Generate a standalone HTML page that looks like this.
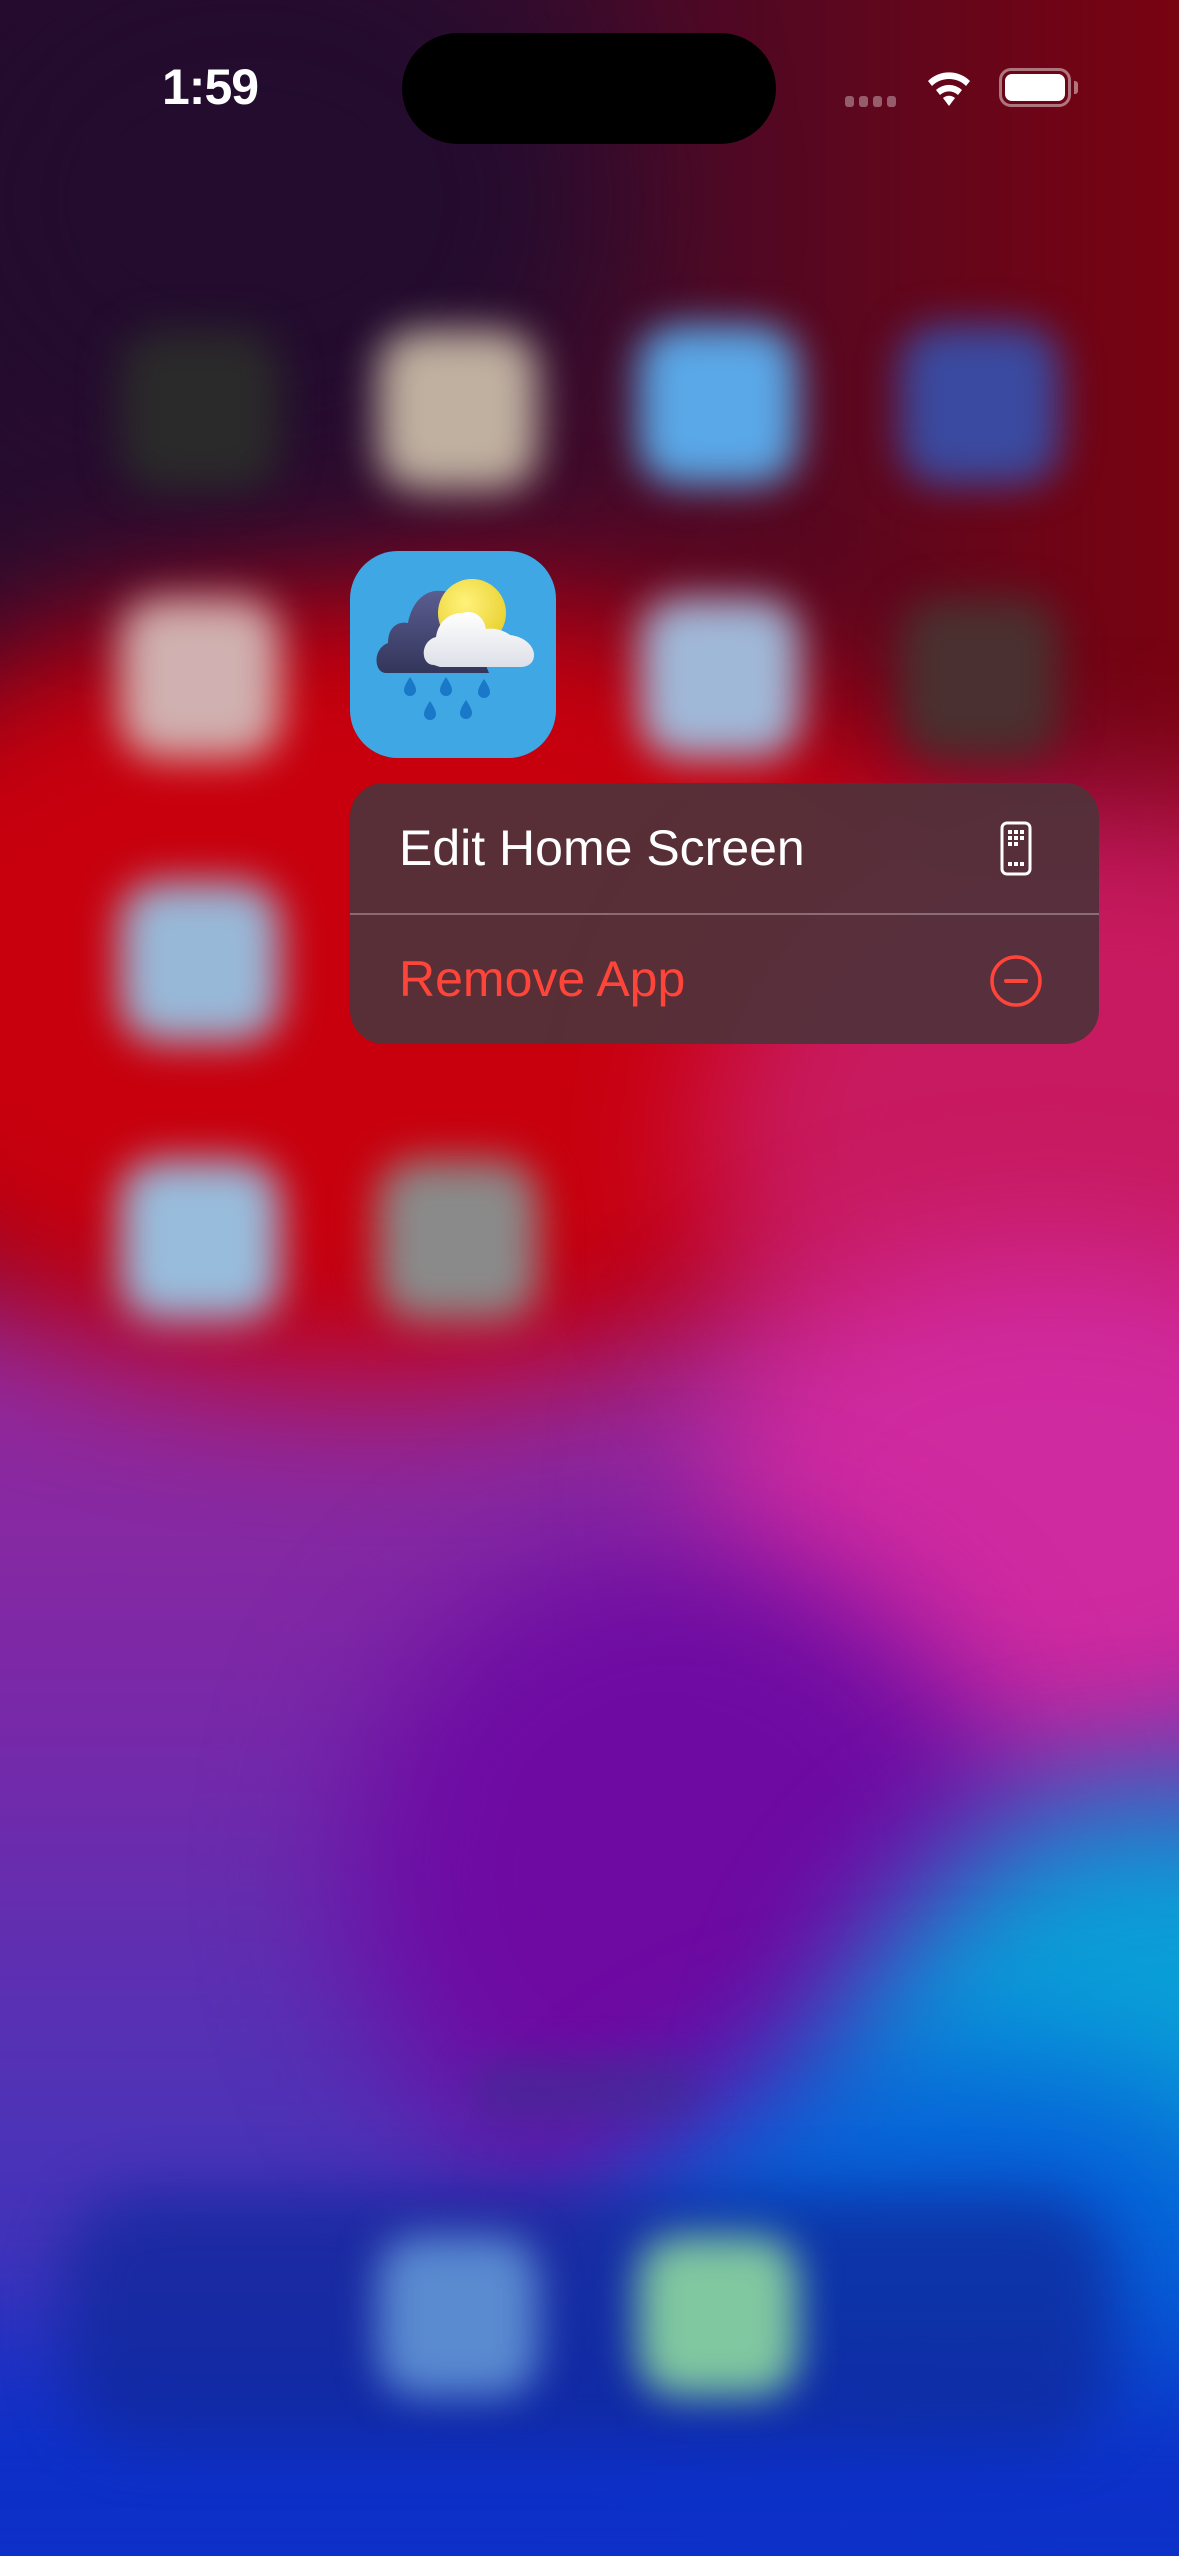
<!DOCTYPE html>
<html><head><meta charset="utf-8"><style>
*{margin:0;padding:0;box-sizing:border-box}
html,body{width:1179px;height:2556px;overflow:hidden}
body{position:relative;background:#1530c8;font-family:"Liberation Sans",sans-serif}
.bg{position:absolute;left:0;top:0;width:1179px;height:2556px;overflow:hidden}
.b{position:absolute;filter:blur(70px)}
.ic{position:absolute;width:160px;height:160px;border-radius:40px;filter:blur(20px)}
</style></head><body>
<div class="bg">
 <div class="b" style="left:-200px;top:-200px;width:1600px;height:1700px;background:linear-gradient(90deg,#220c2e 0%,#350c30 40%,#6a0518 75%,#8a0008 100%)"></div>
 <div class="b" style="left:-300px;top:1250px;width:1800px;height:1500px;background:linear-gradient(180deg,#9a2a9a 0%,#7a28a8 30%,#4a34b8 60%,#1a30c0 100%)"></div>
 <div class="b" style="left:-250px;top:580px;width:1250px;height:800px;border-radius:50%;background:#c8000e"></div>
 <div class="b" style="left:700px;top:800px;width:800px;height:700px;border-radius:50%;background:#c81a60"></div>
 <div class="b" style="left:700px;top:1250px;width:700px;height:500px;border-radius:50%;background:#d02aa0"></div>
 <div class="b" style="left:350px;top:1550px;width:650px;height:650px;border-radius:50%;background:#6e0aa2"></div>
 <div class="b" style="left:820px;top:1800px;width:700px;height:700px;border-radius:50%;background:#0aa0d8"></div>
 <div class="b" style="left:600px;top:2050px;width:700px;height:450px;border-radius:50%;background:#0660d8"></div>
 <div class="b" style="left:-200px;top:2350px;width:1600px;height:300px;background:#0c30c8"></div>
 <div class="b" style="left:-100px;top:-100px;width:700px;height:600px;border-radius:50%;background:#230c2e;filter:blur(90px)"></div>
 <div class="ic" style="left:120px;top:330px;background:#2a2a2a"></div>
 <div class="ic" style="left:378px;top:330px;background:#c0b0a0"></div>
 <div class="ic" style="left:638px;top:325px;background:#5aa8e8"></div>
 <div class="ic" style="left:900px;top:325px;background:#3a4aa0"></div>
 <div class="ic" style="left:120px;top:598px;background:#d0b0b0"></div>
 <div class="ic" style="left:640px;top:598px;background:#a0b8d8"></div>
 <div class="ic" style="left:900px;top:598px;background:#4a3030"></div>
 <div class="ic" style="left:120px;top:882px;background:#98b8d8"></div>
 <div class="ic" style="left:120px;top:1160px;background:#98bcdc"></div>
 <div class="ic" style="left:378px;top:1160px;background:#8a8a8a"></div>
 <div style="position:absolute;left:470px;top:2060px;width:230px;height:60px;border-radius:30px;background:#3a3090;filter:blur(20px);opacity:.6"></div>
 <div style="position:absolute;left:65px;top:2192px;width:1050px;height:253px;border-radius:80px;background:#10289a;opacity:.75;filter:blur(30px)"></div>
 <div class="ic" style="left:378px;top:2236px;background:#5a8ad0"></div>
 <div class="ic" style="left:638px;top:2236px;background:#80c8a0"></div>
</div>

<div style="position:absolute;left:402px;top:33px;width:374px;height:111px;border-radius:56px;background:#000"></div>
<div style="position:absolute;left:162px;top:58px;font-size:50px;font-weight:bold;color:#fff;letter-spacing:-1px">1:59</div>
<div style="position:absolute;left:845px;top:96px;display:flex;gap:5px">
 <i style="width:9px;height:11px;border-radius:3px;background:rgba(255,255,255,.35)"></i><i style="width:9px;height:11px;border-radius:3px;background:rgba(255,255,255,.35)"></i><i style="width:9px;height:11px;border-radius:3px;background:rgba(255,255,255,.35)"></i><i style="width:9px;height:11px;border-radius:3px;background:rgba(255,255,255,.35)"></i>
</div>
<svg style="position:absolute;left:923px;top:68px" width="52" height="40" viewBox="0 0 52 40"><path d="M26 38 L20 30 A9 9 0 0 1 32 30 Z" fill="#fff"/><path d="M13 22 A19 19 0 0 1 39 22 L35 27 A13 13 0 0 0 17 27 Z" fill="#fff"/><path d="M5 13 A30 30 0 0 1 47 13 L43 18 A24 24 0 0 0 9 18 Z" fill="#fff"/></svg>
<div style="position:absolute;left:999px;top:68px;width:72px;height:39px;border-radius:12px;border:3px solid rgba(255,255,255,.45)"></div>
<div style="position:absolute;left:1005px;top:74px;width:60px;height:27px;border-radius:7px;background:#fff"></div>
<div style="position:absolute;left:1074px;top:81px;width:4px;height:13px;border-radius:0 3px 3px 0;background:rgba(255,255,255,.45)"></div>

<div style="position:absolute;left:350px;top:551px;width:206px;height:207px;border-radius:48px;background:#3fa8e4;overflow:hidden">
 <svg width="206" height="207" viewBox="0 0 206 207">
  <defs><radialGradient id="s" cx=".4" cy=".35" r=".7"><stop offset="0" stop-color="#fff27a"/><stop offset="1" stop-color="#e8d030"/></radialGradient>
  <linearGradient id="d" x1="0" y1="0" x2="0" y2="1"><stop offset="0" stop-color="#5a5e90"/><stop offset="1" stop-color="#33355a"/></linearGradient>
  <linearGradient id="w" x1="0" y1="0" x2="0" y2="1"><stop offset="0" stop-color="#fff"/><stop offset="1" stop-color="#dde0e8"/></linearGradient></defs>
  <path d="M36 122 C24 122 22 98 38 92 C38 76 48 70 58 72 C62 50 76 38 92 40 C108 40 118 54 118 70 L139 122 Z" fill="url(#d)"/>
  <circle cx="122" cy="62" r="34" fill="url(#s)"/>
  <path d="M84 114 C70 114 70 90 86 86 C88 72 98 62 112 62 C124 58 134 66 136 78 C150 76 160 84 160 84 C176 86 184 96 184 104 C184 112 178 116 170 116 L90 116 Z" fill="url(#w)"/>
  <g fill="#1a78c8">
   <path d="M60 126 c-4 6 -6 10 -6 13 a6 6 0 0 0 12 0 c0 -3 -2 -7 -6 -13z"/>
   <path d="M96 126 c-4 6 -6 10 -6 13 a6 6 0 0 0 12 0 c0 -3 -2 -7 -6 -13z"/>
   <path d="M134 128 c-4 6 -6 10 -6 13 a6 6 0 0 0 12 0 c0 -3 -2 -7 -6 -13z"/>
   <path d="M80 150 c-4 6 -6 10 -6 13 a6 6 0 0 0 12 0 c0 -3 -2 -7 -6 -13z"/>
   <path d="M116 149 c-4 6 -6 10 -6 13 a6 6 0 0 0 12 0 c0 -3 -2 -7 -6 -13z"/>
  </g>
 </svg>
</div>

<div style="position:absolute;left:350px;top:783px;width:749px;height:261px;border-radius:34px;background:rgba(80,50,58,.93);overflow:hidden">
 <div style="position:absolute;left:49px;top:36px;font-size:50px;color:#fff">Edit Home Screen</div>
 <div style="position:absolute;left:0;top:130px;width:100%;height:2px;background:rgba(255,255,255,.3)"></div>
 <div style="position:absolute;left:49px;top:167px;font-size:50px;color:#ff453a">Remove App</div>
 <svg style="position:absolute;left:648px;top:38px" width="36" height="56" viewBox="0 0 36 56"><rect x="4" y="2" width="28" height="51" rx="5" fill="none" stroke="#fff" stroke-width="3"/><g fill="#fff"><rect x="10" y="9" width="4" height="4"/><rect x="16" y="9" width="4" height="4"/><rect x="22" y="9" width="4" height="4"/><rect x="10" y="15" width="4" height="4"/><rect x="16" y="15" width="4" height="4"/><rect x="22" y="15" width="4" height="4"/><rect x="10" y="21" width="4" height="4"/><rect x="16" y="21" width="4" height="4"/><rect x="10" y="41" width="4" height="4"/><rect x="16" y="41" width="4" height="4"/><rect x="22" y="41" width="4" height="4"/></g></svg>
 <svg style="position:absolute;left:639px;top:171px" width="54" height="54" viewBox="0 0 54 54"><circle cx="27" cy="27" r="24" fill="none" stroke="#ff453a" stroke-width="3.5"/><rect x="15" y="25" width="24" height="4" rx="2" fill="#ff453a"/></svg>
</div>
</body></html>
